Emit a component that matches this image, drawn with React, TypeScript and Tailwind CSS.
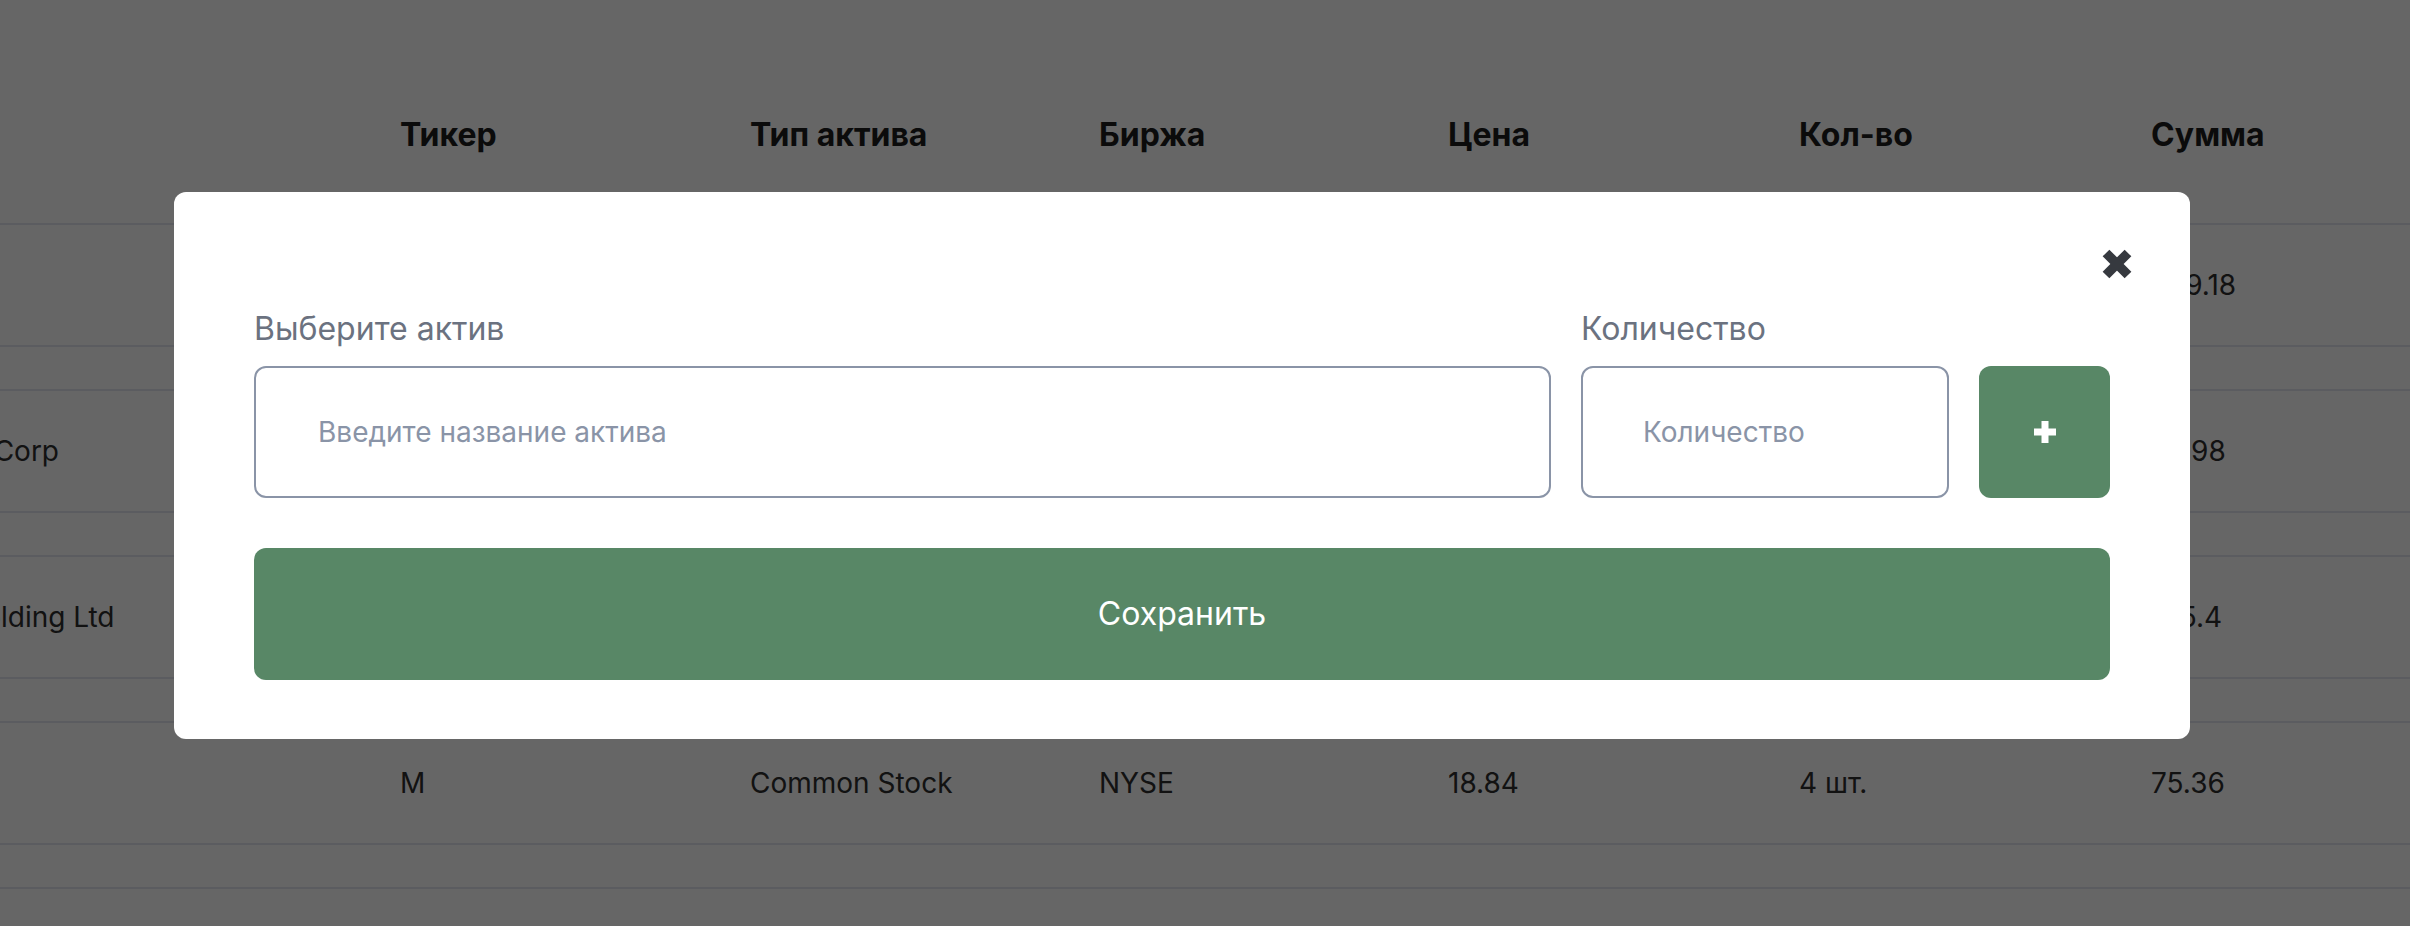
import React from "react";

type Row = {
  name: string;
  ticker: string;
  type: string;
  exchange: string;
  price: string;
  qty: string;
  sum: string;
};

const rows: Row[] = [
  { name: "Apple Inc", ticker: "AAPL", type: "Common Stock", exchange: "NASDAQ", price: "229.18", qty: "1 шт.", sum: "229.18" },
  { name: "Bank of America Corp", ticker: "BAC", type: "Common Stock", exchange: "NYSE", price: "39.99", qty: "2 шт.", sum: "79.98" },
  { name: "Alibaba Group Holding Ltd", ticker: "BABA", type: "ADR", exchange: "NYSE", price: "92.7", qty: "2 шт.", sum: "185.4" },
  { name: "Macy's Inc", ticker: "M", type: "Common Stock", exchange: "NYSE", price: "18.84", qty: "4 шт.", sum: "75.36" },
  { name: "Pfizer Inc", ticker: "PFE", type: "Common Stock", exchange: "NYSE", price: "26.12", qty: "3 шт.", sum: "78.36" },
];

const cols = "grid grid-cols-[633px_350px_349px_349px_351px_352px_1fr]";

function CloseIcon() {
  return (
    <svg width="32" height="32" viewBox="0 0 32 32" fill="none">
      <path d="M5 5L27 27M27 5L5 27" stroke="#36393f" strokeWidth="9.5" strokeLinecap="butt" />
    </svg>
  );
}

function PlusIcon() {
  return (
    <svg width="22" height="22" viewBox="0 0 22 22" fill="#ffffff">
      <rect x="7.5" y="0" width="7" height="22" />
      <rect x="0" y="7.5" width="22" height="7" />
    </svg>
  );
}

export default function App() {
  return (
    <div className="relative h-[926px] w-[2410px] overflow-hidden bg-white font-['Inter',sans-serif]">
      {/* Table behind the modal */}
      <div className="-ml-[233px] pt-[95px]">
        <div className={`${cols} h-[80px] items-center text-[32px] font-bold text-[#1c1c1c]`}>
          <div />
          <div>Тикер</div>
          <div>Тип актива</div>
          <div>Биржа</div>
          <div>Цена</div>
          <div>Кол-во</div>
          <div>Сумма</div>
        </div>
        <div className="mt-[48px] flex flex-col gap-[42px]">
          {rows.map((r) => (
            <div
              key={r.ticker}
              className={`${cols} h-[124px] items-center border-y-2 border-[#e4e6ef] text-[28px] text-[#2e2e2e] whitespace-nowrap`}
            >
              <div>{r.name}</div>
              <div>{r.ticker}</div>
              <div>{r.type}</div>
              <div>{r.exchange}</div>
              <div>{r.price}</div>
              <div>{r.qty}</div>
              <div>{r.sum}</div>
            </div>
          ))}
        </div>
      </div>

      {/* Overlay + modal */}
      <div className="absolute inset-0 bg-black/60 pl-[174px] pt-[192px]">
        <div className="relative w-[2016px] rounded-[12px] bg-white px-[80px] pt-[116px] pb-[59px]">
          <button className="absolute right-[57px] top-[56px]">
            <CloseIcon />
          </button>

          <div className="flex items-end gap-[30px]">
            <div className="flex flex-1 flex-col">
              <label className="mb-[16px] h-[42px] text-[32px] leading-[42px] text-[#6b7280]">Выберите актив</label>
              <div className="flex h-[132px] items-center rounded-[12px] border-2 border-[#8a94a7] pl-[62px] text-[28px] text-[#8a94a7]">
                Введите название актива
              </div>
            </div>
            <div className="flex w-[368px] flex-col">
              <label className="mb-[16px] h-[42px] text-[32px] leading-[42px] text-[#6b7280]">Количество</label>
              <div className="flex h-[132px] items-center rounded-[12px] border-2 border-[#8a94a7] pl-[60px] text-[28px] text-[#8a94a7]">
                Количество
              </div>
            </div>
            <button className="flex h-[132px] w-[131px] items-center justify-center rounded-[12px] bg-[#588766]">
              <PlusIcon />
            </button>
          </div>

          <button className="mt-[50px] flex h-[132px] w-full items-center justify-center rounded-[12px] bg-[#588766] text-[32px] text-white">
            Сохранить
          </button>
        </div>
      </div>
    </div>
  );
}
